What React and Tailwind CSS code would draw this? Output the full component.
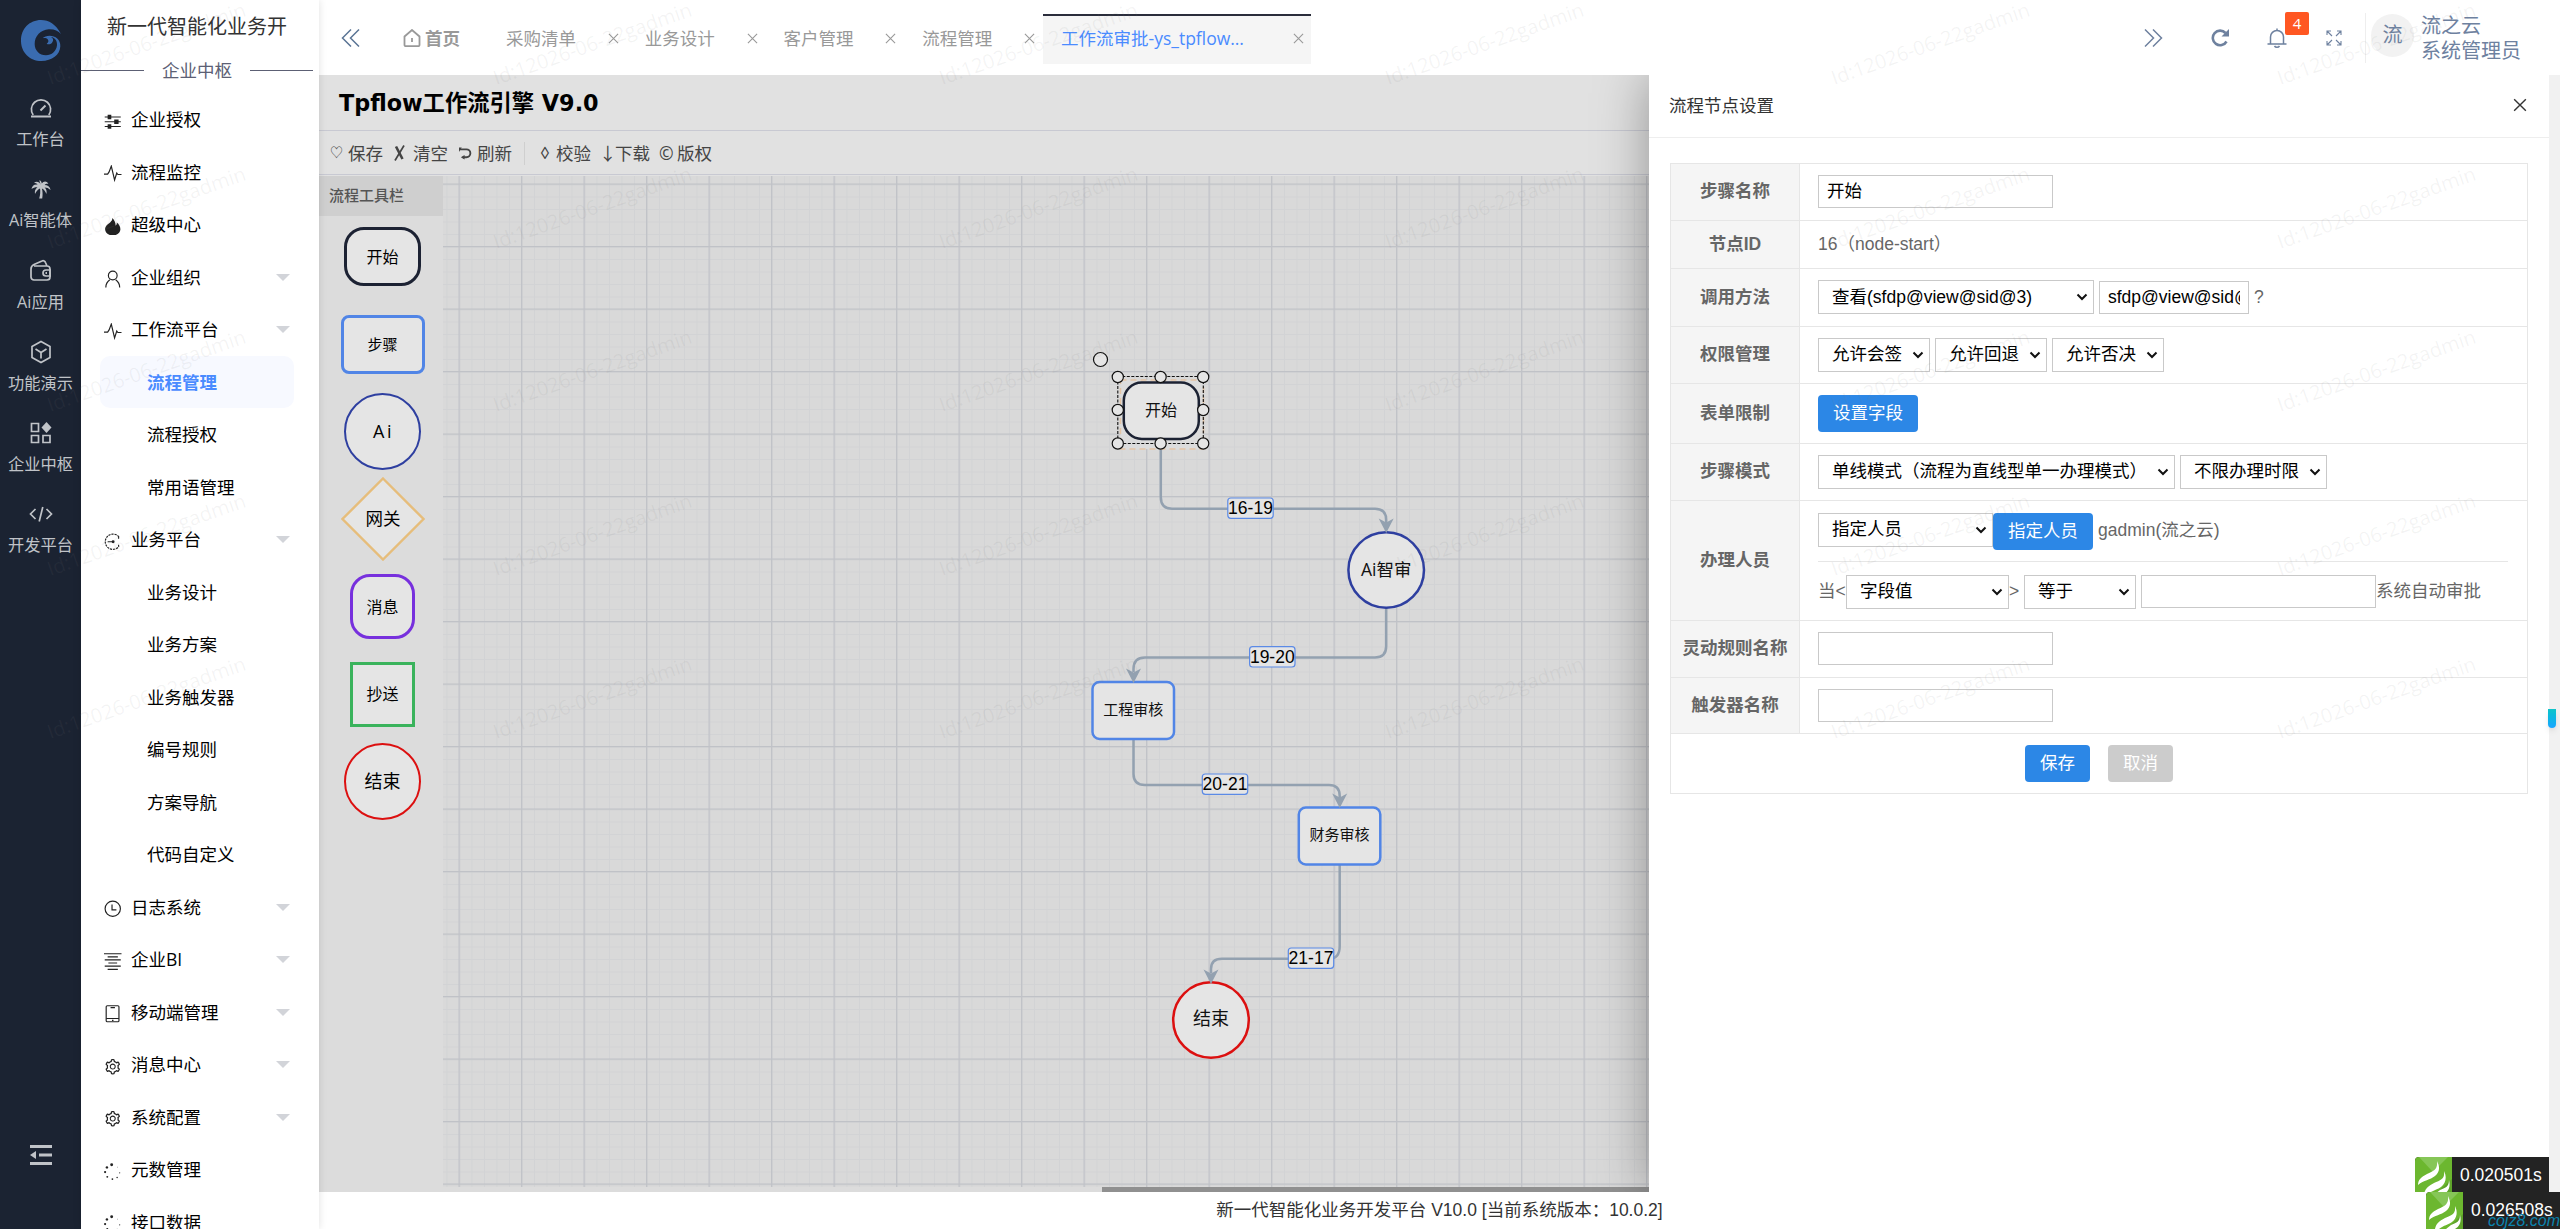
import React from 'react';
import { AiOutlineSetting } from 'react-icons/ai';

const railItems = [
  { name: '工作台', icon: 'gauge' },
  { name: 'Ai智能体', icon: 'palm' },
  { name: 'Ai应用', icon: 'wallet' },
  { name: '功能演示', icon: 'cube' },
  { name: '企业中枢', icon: 'apps' },
  { name: '开发平台', icon: 'code' }
];

const menuItems = [
  { name: '企业授权', icon: 'sliders' },
  { name: '流程监控', icon: 'pulse' },
  { name: '超级中心', icon: 'fire' },
  { name: '企业组织', icon: 'user', arrow: true },
  { name: '工作流平台', icon: 'pulse', arrow: true },
  { name: '流程管理', sub: true, active: true },
  { name: '流程授权', sub: true },
  { name: '常用语管理', sub: true },
  { name: '业务平台', icon: 'dial', arrow: true },
  { name: '业务设计', sub: true },
  { name: '业务方案', sub: true },
  { name: '业务触发器', sub: true },
  { name: '编号规则', sub: true },
  { name: '方案导航', sub: true },
  { name: '代码自定义', sub: true },
  { name: '日志系统', icon: 'clock', arrow: true },
  { name: '企业BI', icon: 'lines', arrow: true },
  { name: '移动端管理', icon: 'phone', arrow: true },
  { name: '消息中心', icon: 'gear', arrow: true },
  { name: '系统配置', icon: 'gear', arrow: true },
  { name: '元数管理', icon: 'dots' },
  { name: '接口数据', icon: 'dots' }
];

const tabs = ['采购清单', '业务设计', '客户管理', '流程管理'];

const icons = {
  gauge: (
    <>
      <path d="M4.2 19A9.6 9.6 0 1 1 19.8 19" />
      <path d="M2 20.5H22" strokeWidth="2" />
      <path d="M11.5 14.5L16.5 9.5" strokeWidth="2" />
    </>
  ),
  palm: (
    <path
      fill="currentColor"
      stroke="none"
      d="M12 8C10 4 7 4 5 6c2 0 3 .5 3.5 1.5C5 7 3 9 2.500 12c2-1.500 4-2 6-1.800C6 12 5.500 14 6 17c1.500-3 3-4.500 5-5.500.5 3 .3 6-.8 10h3c.6-4 .5-7-.3-10 2 .8 3.300 2.500 4.500 5.500.6-3 0-4.800-1.800-6.500 2.200 0 4 .8 6 2.500-.6-3.500-3-5-6-5 .8-1 2-1.500 3.800-1.200C17.500 3.500 14.500 4 12.800 6.500 12.600 5 12 4 10.500 3c0 2 .5 3 1.500 5z"
    />
  ),
  wallet: (
    <>
      <path d="M5 7h13a3 3 0 0 1 3 3v8a3 3 0 0 1-3 3H5a3 3 0 0 1-3-3v-8c0-2 1-3.500 3-4.500L13 2c1.500-.8 3 .2 3.500 1.500L18 7" />
      <path d="M21 11h-4a3 3 0 0 0 0 6h4z" />
      <path d="M16.500 14h1.500" strokeWidth="2" />
    </>
  ),
  cube: (
    <>
      <path d="M12 1.500L21 6.500V17.500L12 22.500L3 17.500V6.500Z" />
      <path d="M6.500 9L12 12.500L17.500 9M12 12.500V18.500" />
    </>
  ),
  apps: (
    <>
      <path d="M2.500 2.500h7v8h-7zM2.500 14.500h7v7h-7zM14 14.500h7v7h-7z" />
      <path d="M17.500 1l5 5.500-5 5.500-5-5.500z" fill="currentColor" stroke="none" />
    </>
  ),
  code: <path d="M6.500 7L1.500 12l5 5M17.500 7l5 5-5 5M13.800 5L10.200 19.500" />,
  sliders: (
    <>
      <path d="M1 5.500h22M1 12h22M1 18.500h22" />
      <path d="M5 2.500h5v6H5zM14 9h6v6h-6zM5 15.500h5v6H5z" fill="currentColor" stroke="none" />
    </>
  ),
  pulse: <path d="M0 12.500h5l2-3 3-8 4.500 19 3-9.500 1.500 2h5" />,
  fire: (
    <path
      fill="currentColor"
      stroke="none"
      d="M11 0c1 3-1 4-2 5.500C5 9 1.500 11 1.500 15.500 1.500 20 6 24 12 24s10.500-4 10.500-8.500c0-4-2-7.500-5-9.500.3 2-.2 3-1.500 4.500C16 6 14 2 11 0z"
    />
  ),
  user: (
    <>
      <circle cx="12" cy="7.500" r="6" />
      <path d="M2.500 24c0-5 2-8 5.500-10.500M21.500 24c0-5-2-8-5.500-10.500" />
    </>
  ),
  dial: (
    <>
      <path d="M20.500 5.500A10.500 10.500 0 1 0 20.500 18.500" strokeDasharray="3 1.200" />
      <path d="M5 12h7M20 5v3M20 16v3" />
      <circle cx="12.500" cy="12" r="2" fill="currentColor" stroke="none" />
    </>
  ),
  clock: (
    <>
      <circle cx="12" cy="12" r="10.500" />
      <path d="M11 6v7.500h6" />
    </>
  ),
  lines: <path d="M0 1h24M5 5.200h14M1 9.500h22M6 13.700h12M1 18h22M5 22.500h14" />,
  phone: (
    <>
      <rect x="3" y="1" width="17.500" height="22" rx="1.500" />
      <path d="M3 18.500h17.500M9 3.500h6M11 21h2" />
    </>
  ),
  dots: (
    <g fill="currentColor" stroke="none">
      <circle cx="10.500" cy="2.500" r="2" />
      <circle cx="4" cy="6" r="1.700" />
      <circle cx="1.500" cy="12.500" r="1.500" />
      <circle cx="4.500" cy="19" r="1.300" />
      <circle cx="11.500" cy="22" r="1.200" />
      <circle cx="18" cy="20" r="1" />
      <circle cx="21.500" cy="13.500" r=".8" />
      <circle cx="18.500" cy="5.500" r=".5" />
    </g>
  )
};

function Icon({ name, className, width = 2 }) {
  if (name === 'gear') return <AiOutlineSetting className={className} />;
  return (
    <svg viewBox="0 0 24 24" className={className} fill="none" stroke="currentColor" strokeWidth={width}>
      {icons[name]}
    </svg>
  );
}

function Logo() {
  return (
    <svg viewBox="0 0 120 123" className="h-[41px] w-[40px]">
      <path
        fill="#3a6cb0"
        d="M120 42C104 12 84 0 60 0 26 0 0 26 0 62c0 35 26 61 61 61 32 0 56-18 57-44 1-20-15-32-32-32-9 0-17 3-21 8 5-2 12-1 15 3 4 5 2 11-3 13 4 3 12 2 16-3 6-7 3-14-3-17 12 2 19 11 18 25-2 18-16 30-33 30-20 0-34-15-34-34 0-24 18-42 42-44 16-1 28 4 37 14z"
      />
    </svg>
  );
}

function Rail() {
  return (
    <nav className="flex w-[81px] shrink-0 flex-col items-center bg-[#1b2332] text-[#c0c3c8]">
      <div className="flex h-[83px] w-full justify-center pt-5"><Logo /></div>
      {railItems.map((item) => (
        <div key={item.name} className="flex h-[81.3px] w-full flex-col items-center pt-[13px]">
          <Icon name={item.icon} className="h-6 w-6" width={1.7} />
          <span className="mt-[7px] text-[16.25px] leading-6 whitespace-nowrap">{item.name}</span>
        </div>
      ))}
      <svg viewBox="0 0 22 20" className="mt-auto mb-16 h-5 w-[22px]" fill="currentColor">
        <path d="M0 0h22v3H0zM9 8.500h13v3H9zM0 17h22v3H0zM0 10l6-4v8z" />
      </svg>
    </nav>
  );
}

function Sidebar() {
  return (
    <aside className="relative z-10 flex w-[238px] shrink-0 flex-col overflow-hidden bg-white shadow-[0_0_8px_rgba(0,0,0,0.12)]">
      <div className="pt-[11px] pr-1.5 text-center text-[20px] leading-8 text-[#333]">新一代智能化业务开</div>
      <div className="mt-3.5 flex h-7 items-center text-[17.5px] text-[#5c6074]">
        <span className="h-px w-[63px] bg-[#5c6074]" />
        <span className="w-[106px] text-center">企业中枢</span>
        <span className="h-px w-[63px] bg-[#5c6074]" />
      </div>
      <ul className="mt-[10px] text-[17.5px] text-black">
        {menuItems.map((item) => (
          <li
            key={item.name}
            className={`ml-[19px] flex h-[52.5px] w-[194px] items-center rounded-[10px] ${
              item.active ? 'bg-[#f7f9ff] font-bold text-[#4a8bff]' : ''
            }`}
          >
            {item.sub ? <span className="w-[47px]" /> : (
              <span className="w-[31px] pt-1 pl-1 text-[#222]">
                <Icon name={item.icon} className="h-[17.5px] w-[17.5px]" width={1.6} />
              </span>
            )}
            <span className="grow">{item.name}</span>
            {item.arrow && (
              <span className="mr-1 border-x-[7px] border-t-[7px] border-x-transparent border-t-[#d2d4d9]" />
            )}
          </li>
        ))}
      </ul>
    </aside>
  );
}

function Cross({ className }) {
  return (
    <svg viewBox="0 0 12 12" className={className} fill="none" stroke="currentColor" strokeWidth="1.200">
      <path d="M1 1l10 10M11 1L1 11" />
    </svg>
  );
}

function Header() {
  return (
    <header className="flex h-[75px] shrink-0 items-center bg-white pt-px text-[17.5px] text-[#999]">
      <svg viewBox="0 0 20 18" className="mr-[24px] ml-[22px] h-[18px] w-5 text-[#5b7595]" fill="none" stroke="currentColor" strokeWidth="1.500">
        <path d="M10 .5L1.500 9l8.500 8.500M18 .5L9.500 9l8.500 8.500" />
      </svg>
      <div className="flex w-[103px] items-center gap-1 pl-[18px] font-bold">
        <svg viewBox="0 0 18 18" className="h-[18px] w-[18px]" fill="none" stroke="currentColor" strokeWidth="1.800">
          <path d="M1.500 7.500L9 1l7.500 6.500V16a1.200 1.200 0 0 1-1.200 1.200H2.700A1.200 1.200 0 0 1 1.500 16zM9 9v4" />
        </svg>
        <span>首页</span>
      </div>
      {tabs.map((tab) => (
        <div key={tab} className="flex w-[138.75px] items-center justify-between pr-2 pl-[18px]">
          <span>{tab}</span>
          <Cross className="h-[11px] w-[11px]" />
        </div>
      ))}
      <div className="mt-[2px] flex h-[50px] w-[268px] items-center justify-between border-t-2 border-[#2a2d3b] bg-[#f5f5f5] pr-[7px] pb-[3px] pl-[18px]">
        <span className="text-[#4a8bff]">工作流审批-ys_tpflow…</span>
        <Cross className="h-[11px] w-[11px]" />
      </div>
      <div className="ml-auto flex h-full items-center text-[#6e819f]">
        <svg viewBox="0 0 20 18" className="mr-0.5 h-[18px] w-5" fill="none" stroke="currentColor" strokeWidth="1.500">
          <path d="M2 .5L10.500 9 2 17.500M10 .5L18.500 9 10 17.500" />
        </svg>
        <svg viewBox="0 0 18 18" className="ml-[46px] h-[18px] w-[18px]" fill="none" stroke="currentColor" strokeWidth="2.600">
          <path d="M15.500 12.500A7.300 7.300 0 1 1 14.500 4" />
          <path d="M18 0v7.500h-7.500z" fill="currentColor" stroke="none" />
        </svg>
        <div className="relative ml-[38px]">
          <svg viewBox="0 0 20 20" className="h-5 w-5" fill="none" stroke="currentColor" strokeWidth="1.500">
            <path d="M.5 16h19M3.500 16V9a6.500 6.500 0 0 1 13 0v7M10 2.500V.5M7.500 18c1 1.600 4 1.600 5 0" />
          </svg>
          <span className="absolute -top-[16px] left-[18px] flex h-[23px] w-6 items-center justify-center rounded-xs bg-[#ff5722] text-[15px] text-white">4</span>
        </div>
        <svg viewBox="0 0 16 16" className="ml-[39px] h-4 w-4" fill="none" stroke="currentColor" strokeWidth="1.100">
          <path d="M6 6L1 1M1 5V1h4M10 6l5-5M11 1h4v4M6 10l-5 5M1 11v4h4M10 10l5 5M15 11v4h-4" />
        </svg>
        <span className="ml-[23px] h-[50px] w-px bg-[#eee]" />
        <span className="mb-1.5 ml-[5px] flex h-[43px] w-[43px] items-center justify-center rounded-full bg-[#f2f2f2] text-[20px]">流</span>
        <span className="mr-[39px] ml-[7px] text-[20px] leading-[25px]">
          流之云
          <br />
          系统管理员
        </span>
      </div>
    </header>
  );
}

function Palette() {
  const slot = 'flex h-[87.5px] items-center justify-center text-black';
  return (
    <div className="flex w-[124px] shrink-0 flex-col bg-[#dcdcdc]">
      <div className="flex h-[40px] items-center bg-[#cfcfcf] pb-px pl-[10px] text-[15px] font-medium text-[#555]">流程工具栏</div>
      <div className="-mt-[3px] pl-[3px]">
        <div className={slot}><span className="flex h-[59px] w-[77px] items-center justify-center rounded-[20px] border-[3px] border-[#1c2233] bg-[#e5e5e5] text-[16px]">开始</span></div>
        <div className={slot}><span className="flex h-[59px] w-[84px] items-center justify-center rounded-lg border-[3px] border-[#5185e6] bg-[#e5e5e5] text-[15px]">步骤</span></div>
        <div className={slot}><span className="flex h-[77px] w-[77px] items-center justify-center rounded-full border-[2px] border-[#2e3fa0] bg-[#e5e5e5] pl-0.5 text-[18px] tracking-[2.5px]">Ai</span></div>
        <div className={slot}>
          <svg viewBox="0 0 84 84" className="h-[84px] w-[84px]">
            <path d="M42 1.500L82.500 42 42 82.500 1.500 42z" fill="#e5e5e5" stroke="#e6bd7b" strokeWidth="2.400" />
            <text x="42" y="48" fontSize="17.5" textAnchor="middle">网关</text>
          </svg>
        </div>
        <div className={slot}><span className="flex h-[65px] w-[65px] items-center justify-center rounded-[20px] border-[3px] border-[#7730dd] bg-[#e5e5e5] text-[16px]">消息</span></div>
        <div className={slot}><span className="flex h-[65px] w-[65px] items-center justify-center border-[3px] border-[#3ab35c] bg-[#e5e5e5] text-[16px]">抄送</span></div>
        <div className={slot}><span className="flex h-[77px] w-[77px] items-center justify-center rounded-full border-[2px] border-[#dc1010] bg-[#e5e5e5] text-[18px]">结束</span></div>
      </div>
    </div>
  );
}

const edges = [
  'M1160.800 440V497Q1160.800 508.700 1172 508.700H1375Q1386.200 508.700 1386.200 520V523',
  'M1386.200 608V646Q1386.200 657.500 1375 657.500H1145Q1133.500 657.500 1133.500 669V672',
  'M1133.500 739V774Q1133.500 785 1145 785H1329Q1339.700 785 1339.700 796V799',
  'M1339.700 864V946Q1339.700 958.800 1329 958.800H1222Q1211 958.800 1211 969V973'
];

const arrows = [[1386.2, 533], [1133.5, 683], [1339.7, 808], [1211, 984]];

const edgeLabels = [
  ['16-19', 1250.5, 508],
  ['19-20', 1272.3, 656.7],
  ['20-21', 1225, 784],
  ['21-17', 1311, 958]
];

const handles = [
  [1117.8, 377], [1160.6, 377], [1203.2, 377],
  [1117.8, 410], [1203.2, 410],
  [1117.8, 443.5], [1160.6, 443.5], [1203.2, 443.5]
];

function FlowCanvas() {
  return (
    <svg viewBox="443 176 2106 1011" className="block h-[1011px] w-[2106px]">
      <defs>
        <pattern id="minor" x="1084" y="371.500" width="12.500" height="12.500" patternUnits="userSpaceOnUse">
          <path d="M.5 0V12.500M0 .5H12.500" stroke="#d2d3d5" strokeWidth="1" fill="none" />
        </pattern>
        <pattern id="major" x="1083.500" y="371" width="62.500" height="62.500" patternUnits="userSpaceOnUse">
          <path d="M.7 0V62.500M0 .7H62.500" stroke="#c0c2c7" strokeWidth="1.250" fill="none" />
        </pattern>
      </defs>
      <rect x="443" y="176" width="2106" height="1011" fill="#d9d9d9" />
      <rect x="443" y="176" width="2106" height="1011" fill="url(#minor)" />
      <rect x="443" y="176" width="2106" height="1011" fill="url(#major)" />

      {edges.map((d) => (
        <path key={d} d={d} fill="none" stroke="#93a1b0" strokeWidth="2.500" />
      ))}

      {/* nodes */}
      <g fill="#e5e5e5" strokeWidth="2.500">
        <rect x="1120.500" y="380" width="83" height="69" fill="#dcdcdc" stroke="#e3c4a5" strokeWidth="1.500" strokeDasharray="6 4" />
        <rect x="1123.800" y="382.500" width="75" height="56.500" rx="18" stroke="#1c2233" />
        <circle cx="1386.200" cy="570" r="37.800" stroke="#2e3fa0" />
        <rect x="1092.500" y="682" width="81.500" height="57" rx="7" stroke="#5185e6" />
        <rect x="1298.800" y="807.500" width="81.500" height="57" rx="7" stroke="#5185e6" />
        <circle cx="1211" cy="1020" r="37.800" stroke="#dc1010" />
      </g>
      {arrows.map(([x, y]) => (
        <path key={y} d={`M${x} ${y}l-7.500-14.500 7.500 4 7.500-4z`} fill="#93a1b0" />
      ))}
      <g textAnchor="middle" fill="#111">
        <text x="1161" y="416" fontSize="16">开始</text>
        <text x="1386.200" y="575.500" fontSize="17.5">Ai智审</text>
        <text x="1133.300" y="715" fontSize="15">工程审核</text>
        <text x="1339.500" y="840" fontSize="15">财务审核</text>
        <text x="1211" y="1025" fontSize="18">结束</text>
      </g>

      {edgeLabels.map(([label, x, y]) => (
        <g key={label}>
          <rect x={x - 22.7} y={y - 10} width="45.400" height="20.300" rx="3" fill="#e5e5e5" stroke="#5b8ae6" strokeWidth="1.200" />
          <text x={x} y={y + 6} fontSize="17.5" textAnchor="middle" className="font-['Liberation_Sans',sans-serif]">{label}</text>
        </g>
      ))}

      {/* selection box */}
      <rect x="1117.800" y="376.500" width="85.500" height="67" fill="none" stroke="#111" strokeWidth="1.100" strokeDasharray="3 1.500" />
      <g fill="#e5e5e5" stroke="#111" strokeWidth="1.200">
        {handles.map(([x, y]) => (
          <circle key={`${x}-${y}`} cx={x} cy={y} r="5.600" />
        ))}
        <circle cx="1100.500" cy="359.500" r="7" />
      </g>
    </svg>
  );
}

function Designer() {
  return (
    <div className="flex h-full flex-col bg-[#e1e1e1]">
      <div className="flex h-[56px] shrink-0 items-center border-b border-[#c8c9d2] pt-0.5 pl-5 font-['DejaVu_Sans','Noto_Sans_CJK_SC',sans-serif] text-[22.3px] font-bold text-black">
        Tpflow工作流引擎 V9.0
      </div>
      <div className="flex h-[44px] shrink-0 items-center border-b border-[#c8c9d2] pt-px text-[17.5px] whitespace-nowrap text-[#444]">
        <span className="ml-[11px] w-[18px] overflow-hidden text-[13px]">♡</span>
        <span className="w-[46px]">保存</span>
        <svg viewBox="0 0 11 16" className="mr-2 h-4 w-[11px]" fill="none" stroke="currentColor" strokeWidth="2.600">
          <path d="M2 1.500l6.500 12.500" />
          <path d="M10 .5L1 15.500" strokeWidth="1.700" />
        </svg>
        <span className="w-[46px]">清空</span>
        <svg viewBox="0 0 14 13" className="mr-[5px] h-[13px] w-[13px]" fill="none" stroke="currentColor" strokeWidth="2">
          <path d="M1 2h7a4 4 0 0 1 0 8.500H4" />
          <path d="M0 5V0h3zM6 8v5L2 10.500z" fill="currentColor" stroke="none" />
        </svg>
        <span className="w-[47px]">刷新</span>
        <span className="mr-[13px] h-[23px] w-px bg-[#cfcfcf]" />
        <span className="w-[18px] pl-0.5 text-[17px]">◊</span>
        <span className="w-[43px]">校验</span>
        <span className="w-[16px]">↓</span>
        <span className="w-[44px]">下载</span>
        <span className="w-[18px]">©</span>
        <span>版权</span>
      </div>
      <div className="flex grow pt-px">
        <Palette />
        <div className="grow bg-[#dcdcdc]">
          <FlowCanvas />
          <div className="ml-[659px] h-[5px] bg-[#909090]" />
        </div>
      </div>
    </div>
  );
}

function Select({ children, className }) {
  return (
    <span className={`flex h-[34px] shrink-0 items-center justify-between border border-[#c9c9c9] bg-white pr-[5px] pl-[13px] text-black ${className}`}>
      <span>{children}</span>
      <svg viewBox="0 0 12 8" className="h-2 w-3" fill="none" stroke="#111" strokeWidth="2">
        <path d="M1.500 1.500L6 6l4.500-4.500" />
      </svg>
    </span>
  );
}

function Input({ children, className = 'w-[235px]' }) {
  return (
    <span className={`flex h-[33px] shrink-0 items-center overflow-hidden border border-[#c9c9c9] bg-white px-2 text-black ${className}`}>
      <span className="overflow-hidden whitespace-nowrap">{children}</span>
    </span>
  );
}

function Button({ children, className = 'w-[100px] bg-[#2c87e6]' }) {
  return (
    <span className={`flex h-[37px] shrink-0 items-center justify-center rounded-[4px] text-white ${className}`}>{children}</span>
  );
}

function Row({ label, height, children }) {
  return (
    <div className={`flex border-b border-[#e6e6e6] ${height}`}>
      <div className="flex w-[129px] shrink-0 items-center justify-center border-r border-[#e6e6e6] bg-[#f5f5f5] font-bold">{label}</div>
      <div className="flex grow items-center pr-[19px] pl-[18px]">{children}</div>
    </div>
  );
}

function NodePanel() {
  return (
    <section className="absolute top-0 right-0 h-full w-[900px] bg-white shadow-[0_0_50px_rgba(0,0,0,0.35)]">
      <div className="flex h-[62.500px] items-center justify-between border-b border-[#eee] pr-[22px] pb-px pl-5 text-[17.5px] text-[#333]">
        <span>流程节点设置</span>
        <Cross className="h-[14px] w-[14px]" />
      </div>
      <div className="mt-[25px] ml-[21px] w-[858px] border border-b-0 border-[#e6e6e6] font-['Liberation_Sans','Noto_Sans_CJK_SC',sans-serif] text-[17.5px] whitespace-nowrap text-[#666]">
        <Row label="步骤名称" height="h-[57px]"><Input>开始</Input></Row>
        <Row label="节点ID" height="h-[48px]">16（node-start）</Row>
        <Row label="调用方法" height="h-[58px]">
          <Select className="w-[276px]">查看(sfdp@view@sid@3)</Select>
          <Input className="mr-[5px] ml-[5px] w-[150px]">sfdp@view@sid@3</Input>
          ?
        </Row>
        <Row label="权限管理" height="h-[57px]">
          <div className="flex gap-[5px]">
            <Select className="w-[112px]">允许会签</Select>
            <Select className="w-[112px]">允许回退</Select>
            <Select className="w-[112px]">允许否决</Select>
          </div>
        </Row>
        <Row label="表单限制" height="h-[60px]"><Button>设置字段</Button></Row>
        <Row label="步骤模式" height="h-[57px]">
          <Select className="mr-[5px] w-[357px]">单线模式（流程为直线型单一办理模式）</Select>
          <Select className="w-[147px]">不限办理时限</Select>
        </Row>
        <Row label="办理人员" height="h-[120px]">
          <div className="grow pt-px">
            <div className="flex items-start border-b border-[#e6e6e6] pb-[11px]">
              <Select className="w-[175px]">指定人员</Select>
              <Button>指定人员</Button>
              <span className="ml-[5px] leading-[34px]">gadmin(流之云)</span>
            </div>
            <div className="flex items-center pt-[13px]">
              <span className="w-7 shrink-0">当&lt;</span>
              <Select className="w-[163px]">字段值</Select>
              <span className="w-[15px] shrink-0">&gt;</span>
              <Select className="w-[112px]">等于</Select>
              <Input className="ml-[5px] w-[235px]" />
              <span>系统自动审批</span>
            </div>
          </div>
        </Row>
        <Row label="灵动规则名称" height="h-[57px]"><Input /></Row>
        <Row label="触发器名称" height="h-[56px]"><Input /></Row>
        <div className="flex h-[60px] items-center justify-center gap-[18px] border-b border-[#e6e6e6]">
          <Button className="w-[65px] bg-[#2c87e6]">保存</Button>
          <Button className="w-[65px] bg-[#ccc]">取消</Button>
        </div>
      </div>
    </section>
  );
}

function TraceBadge({ time, className }) {
  return (
    <div className={`absolute flex w-[134px] overflow-hidden bg-[#232323] font-['Liberation_Sans',sans-serif] text-[17.5px] text-white ${className}`}>
      <svg viewBox="0 0 37 37" className="h-[37px] w-[37px] shrink-0">
        <path fill="#6cb72f" d="M0 0h37v37H0z" />
        <path fill="#86c657" d="M4 0h29L18 15z" />
        <path fill="#5ea32a" d="M20 37L37 22v15z" />
        <path fill="#fff" d="M22 4c1 8-3 10-10 13-6 3-9 6-9 11 6-5 12-5 17-9 5-4 5-9 2-15zM29 14c1 8-3 9-10 12-6 3-9 6-10 11h4c5-4 9-4 13-7 5-4 6-10 3-16zM34 23c0 7-4 8-9 10l-5 4h9c4-2 7-7 5-14z" />
      </svg>
      <span className="ml-2 leading-[36px]">{time}</span>
    </div>
  );
}

function Watermark() {
  return (
    <div className="pointer-events-none absolute top-0 left-0 z-30 grid h-[817.500px] w-[2676px] grid-cols-6 grid-rows-5">
      {Array.from({ length: 30 }, (_, i) => (
        <div key={i} className="h-[163.500px] w-[446px] pt-[29px] pl-[42px]">
          <div className="w-[208px] -rotate-[19.5deg] text-center text-[20px] leading-[30px] whitespace-nowrap text-[#808080]/9">
            Id:12026-06-22gadmin
          </div>
        </div>
      ))}
    </div>
  );
}

function App() {
  return (
    <div className="relative flex h-[1229px] w-[2560px] overflow-hidden bg-white font-['Open_Sans','Noto_Sans_CJK_SC',sans-serif]">
      <Rail />
      <Sidebar />
      <div className="flex w-[2241px] shrink-0 flex-col">
        <Header />
        <main className="relative flex h-[1117px] shrink-0">
          <div className="relative w-[2230px] shrink-0 overflow-hidden">
            <Designer />
            <NodePanel />
          </div>
          <div className="w-[11px] bg-[#f1f1f1]" />
          <div className="absolute top-[634px] right-1 h-[19px] w-2 rounded-b-full bg-linear-to-b from-[#10c4c9] to-[#1ba5ff] shadow-md" />
          <TraceBadge time="0.020501s" className="right-[11px] bottom-0 h-[35px] rounded-tl" />
        </main>
        <footer className="relative flex h-[37px] items-center bg-white text-[17.5px] text-[#333]">
          <span className="w-full text-center font-['Liberation_Sans','Noto_Sans_CJK_SC',sans-serif]">新一代智能化业务开发平台 V10.0 [当前系统版本：10.0.2]</span>
          <TraceBadge time="0.026508s" className="right-0 bottom-0 h-[37px] rounded-tl" />
          <span className="absolute right-0 bottom-0 font-['Liberation_Sans',sans-serif] text-[16px] leading-4 text-[#0b82ad] italic">cojz8.com</span>
        </footer>
      </div>
      <Watermark />
    </div>
  );
}

export default App;
